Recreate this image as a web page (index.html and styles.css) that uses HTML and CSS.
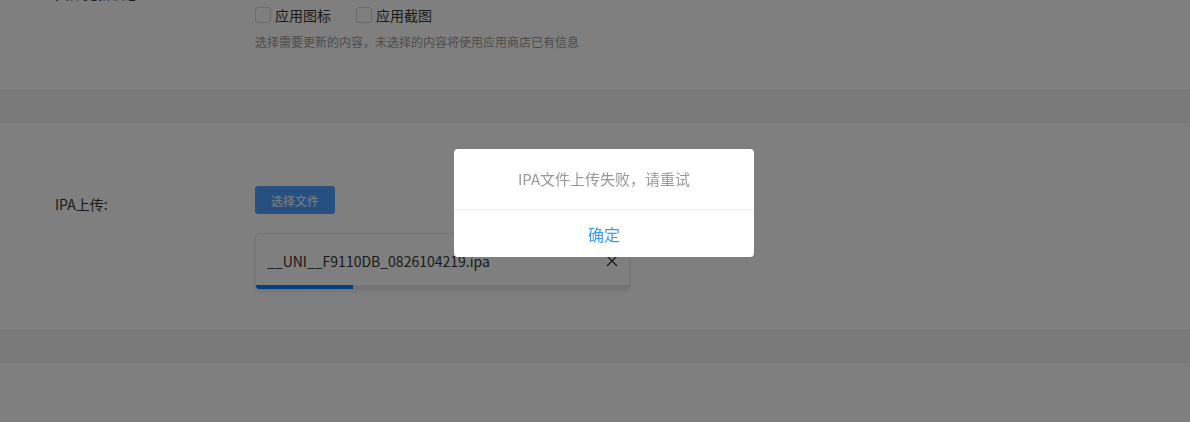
FILE: index.html
```html
<!DOCTYPE html>
<html lang="zh-CN">
<head>
    <meta charset="UTF-8">
    <meta name="viewport" content="width=device-width, initial-scale=1.0">
    <title>应用更新</title>
    <link rel="stylesheet" href="styles.css">
</head>
<body>
    <div class="page">
        <div class="panel panel-info">
            <div class="form-row">
                <label class="form-label">具体更新信息</label>
                <div class="form-content">
                    <div class="checkbox-group">
                        <label class="checkbox"><span class="checkbox-box"></span>应用图标</label>
                        <label class="checkbox"><span class="checkbox-box"></span>应用截图</label>
                    </div>
                    <p class="form-hint">选择需要更新的内容，未选择的内容将使用应用商店已有信息</p>
                </div>
            </div>
        </div>

        <div class="panel panel-upload">
            <div class="form-row">
                <label class="form-label label-upload">IPA上传:</label>
                <div class="form-content">
                    <button class="btn-primary">选择文件</button>
                    <div class="file-card">
                        <div class="file-row">
                            <span class="file-name">__UNI__F9110DB_0826104219.ipa</span>
                            <svg class="file-close" width="12" height="12" viewBox="0 0 12 12">
                                <path d="M1 1L11 11M11 1L1 11" stroke="#333" stroke-width="1.3" fill="none"/>
                            </svg>
                        </div>
                        <div class="progress">
                            <div class="progress-fill" style="width: 26%"></div>
                        </div>
                    </div>
                </div>
            </div>
        </div>

        <div class="panel panel-empty"></div>
    </div>

    <!-- upload error dialog -->
    <div class="mask"></div>
    <div class="dialog">
        <div class="dialog-body">IPA文件上传失败，请重试</div>
        <div class="dialog-footer">确定</div>
    </div>
</body>
</html>
```

FILE: styles.css
```css
:root {
    --primary: #4ca0ff;
    --text: #333;
    --text-muted: #999;
    --border: #ebebeb;
    --bg-color: #f4f4f4;
}

* {
    box-sizing: border-box;
}

body {
    margin: 0;
    font-family: 'Noto Sans CJK SC', 'Noto Sans', sans-serif;
    background-color: var(--bg-color);
    color: var(--text);
    font-size: 14px;
    overflow: hidden;
}

.page {
    margin-top: -40px;
}

.panel {
    background-color: #fff;
    border-top: 1px solid var(--border);
    border-bottom: 1px solid var(--border);
    margin-bottom: 31px;
}

.panel-info {
    height: 131px;
    padding-top: 22px;
}

.panel-upload {
    height: 209px;
    padding-top: 63px;
}

.panel-empty {
    height: 200px;
}

.form-row {
    display: flex;
}

.form-label {
    width: 255px;
    padding-left: 55px;
    line-height: 20px;
    flex-shrink: 0;
}

.label-upload {
    padding-top: 8px;
}

.checkbox-group {
    display: flex;
    gap: 25px;
    padding-top: 22px;
}

.checkbox {
    display: flex;
    align-items: center;
    gap: 4px;
    line-height: 20px;
    color: #333;
}

.checkbox-box {
    width: 16px;
    height: 16px;
    border: 1px solid #d6d6d6;
    border-radius: 3px;
    background-color: #fff;
}

.form-hint {
    margin: 8px 0 0;
    font-size: 12px;
    line-height: 18px;
    color: #999;
}

.btn-primary {
    display: block;
    width: 80px;
    height: 28px;
    border: none;
    border-radius: 3px;
    background-color: var(--primary);
    color: #fff;
    font-family: inherit;
    font-size: 12px;
    cursor: pointer;
}

.file-card {
    width: 375px;
    margin-top: 19px;
    border: 1px solid #e6e6e6;
    border-radius: 4px;
    box-shadow: 0 2px 4px rgba(0, 0, 0, 0.08);
    overflow: hidden;
}

.file-row {
    display: flex;
    align-items: center;
    justify-content: space-between;
    height: 51px;
    padding: 3px 11px 0 11px;
}

.file-name {
    color: #333;
}

.file-close {
    display: block;
}

.progress {
    height: 4px;
    background-color: #e8e8e8;
}

.progress-fill {
    height: 100%;
    background-color: #0a7cff;
}

.mask {
    position: fixed;
    inset: 0;
    background-color: rgba(0, 0, 0, 0.5);
}

.dialog {
    position: fixed;
    top: 149px;
    left: 454px;
    width: 300px;
    background-color: #fff;
    border-radius: 4px;
    overflow: hidden;
}

.dialog-body {
    height: 60px;
    display: flex;
    align-items: center;
    justify-content: center;
    padding-bottom: 1px;
    color: var(--text-muted);
    font-size: 15px;
}

.dialog-footer {
    height: 48px;
    border-top: 1px solid #eee;
    display: flex;
    align-items: center;
    justify-content: center;
    color: #3d9bf5;
    font-size: 16px;
}
```
